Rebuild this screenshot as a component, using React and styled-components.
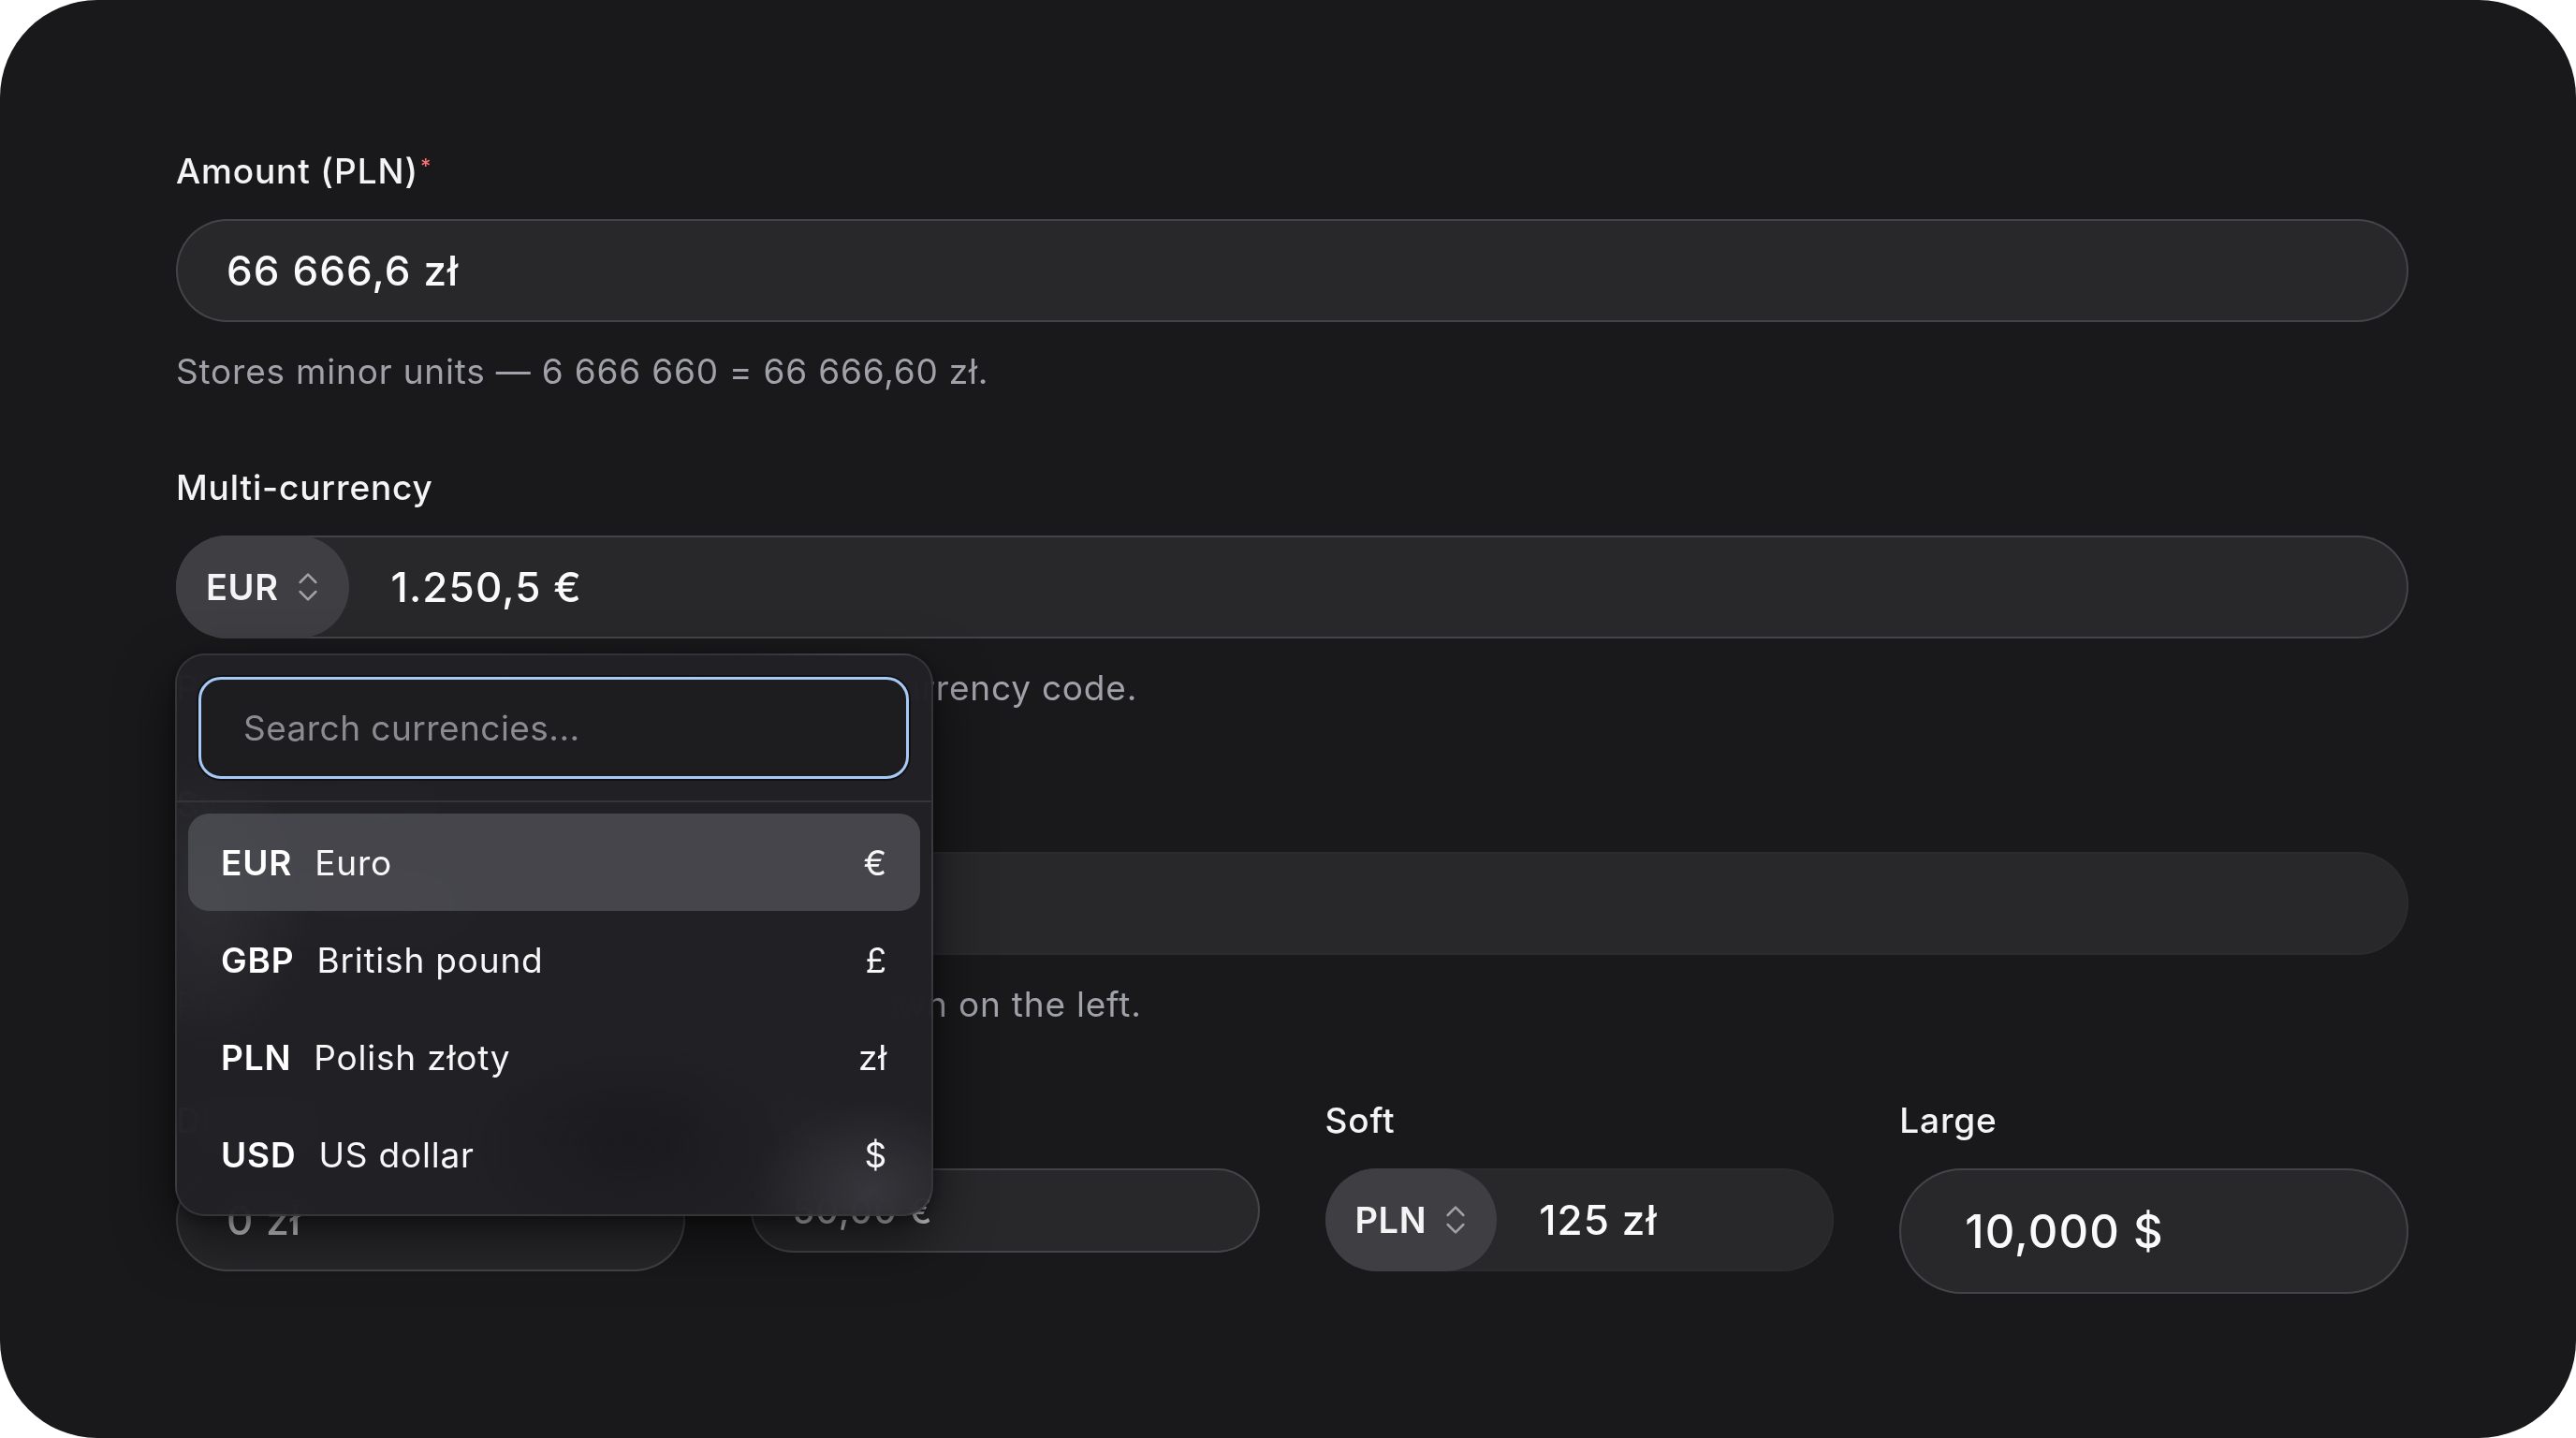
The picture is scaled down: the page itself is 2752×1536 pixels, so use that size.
import React from "react";
import styled, { createGlobalStyle } from "styled-components";
import { ChevronsUpDown } from "lucide-react";

const GlobalStyle = createGlobalStyle`
  html, body {
    margin: 0;
    padding: 0;
    background: #ffffff;
    width: 2752px;
    height: 1536px;
    overflow: hidden;
  }
  * { box-sizing: border-box; }
  body {
    font-family: Inter, "Noto Sans", "Liberation Sans", sans-serif;
  }
`;

const Card = styled.main`
  width: 2752px;
  height: 1536px;
  background: #19191b;
  border-radius: 104px;
  padding: 157px 179px 0 188px;
  font-family: Inter, "Noto Sans", "Liberation Sans", sans-serif;
`;

const Form = styled.div`
  display: flex;
  flex-direction: column;
  gap: 72px;
`;

const Field = styled.div`
  display: flex;
  flex-direction: column;
  gap: 25px;
  min-width: 0;
`;

const Label = styled.label`
  display: block;
  font-size: 37px;
  line-height: 52px;
  height: 52px;
  font-weight: 500;
  color: #f4f4f5;
  letter-spacing: 0.85px;
  white-space: nowrap;
`;

const Required = styled.span`
  color: #f87171;
  font-size: 22px;
  vertical-align: top;
  position: relative;
  top: -6px;
  margin-left: 2px;
`;

const Helper = styled.p`
  margin: 2px 0 0;
  font-size: 37px;
  line-height: 52px;
  color: #a1a1aa;
  font-weight: 400;
  letter-spacing: 0.8px;
  white-space: nowrap;
`;

const Control = styled.div`
  position: relative;
  display: flex;
  align-items: center;
  min-width: 0;
  height: ${(p) => p.$height || 110}px;
  border-radius: 999px;
  background: #28282b;
  box-shadow: inset 0 0 0 2px ${(p) => (p.$filled ? "#2b2b2e" : "#444448")};
`;

const ValueInput = styled.input`
  flex: 1;
  width: 100%;
  min-width: 0;
  height: 100%;
  border: none;
  outline: none;
  background: transparent;
  padding: 0 0 0 ${(p) => p.$pad || 54}px;
  font-family: Inter, "Noto Sans", "Liberation Sans", sans-serif;
  font-size: ${(p) => p.$size || 44}px;
  font-weight: 500;
  color: ${(p) => (p.$dim ? "#cfcfd3" : "#fafafa")};
  letter-spacing: 1.1px;
`;

const CurrencyTrigger = styled.button`
  display: flex;
  align-items: center;
  gap: 11px;
  height: 100%;
  flex-shrink: 0;
  padding: 0 24px 0 32px;
  border: none;
  border-radius: 999px;
  background: #3e3e43;
  color: #f4f4f5;
  font-family: Inter, "Noto Sans", "Liberation Sans", sans-serif;
  font-size: 38px;
  font-weight: 600;
  letter-spacing: 0.6px;
  cursor: pointer;
  svg { color: #a1a1aa; flex-shrink: 0; }
`;

const Row = styled.div`
  display: grid;
  grid-template-columns: repeat(4, minmax(0, 1fr));
  column-gap: 70px;
  align-items: start;
`;

/* Dropdown */
const Menu = styled.div`
  position: absolute;
  top: calc(100% + 16px);
  left: -1px;
  width: 810px;
  z-index: 10;
  border-radius: 32px;
  background:
    radial-gradient(ellipse 180px 140px at 92% 96%, rgba(70, 70, 78, 0.55), transparent 70%),
    radial-gradient(ellipse 160px 220px at 4% 44%, rgba(58, 58, 66, 0.45), transparent 70%),
    radial-gradient(ellipse 260px 160px at 60% 88%, rgba(16, 16, 20, 0.35), transparent 70%),
    rgba(33, 33, 37, 0.96);
  backdrop-filter: blur(28px) saturate(140%);
  -webkit-backdrop-filter: blur(28px) saturate(140%);
  border: 2px solid rgba(255, 255, 255, 0.09);
  box-shadow: 0 24px 60px rgba(0, 0, 0, 0.55), 0 4px 14px rgba(0, 0, 0, 0.35);
  overflow: hidden;
`;

const SearchWrap = styled.div`
  padding: 23px 24px 23px 23px;
  border-bottom: 2px solid #353539;
`;

const Search = styled.input`
  display: block;
  width: 100%;
  height: 109px;
  border-radius: 24px;
  border: 3.5px solid #a6c9f5;
  background: #1d1d20;
  box-shadow: 0 0 0 2px rgba(0, 0, 0, 0.45);
  outline: none;
  padding: 0 0 0 45px;
  font-family: Inter, "Noto Sans", "Liberation Sans", sans-serif;
  font-size: 37px;
  letter-spacing: 0.45px;
  color: #f4f4f5;
  &::placeholder { color: #8b8b91; }
`;

const List = styled.ul`
  list-style: none;
  margin: 0;
  padding: 12px;
  display: flex;
  flex-direction: column;
`;

const Option = styled.li`
  display: flex;
  align-items: center;
  gap: 24px;
  height: 104px;
  padding: 0 35px;
  border-radius: 22px;
  background: ${(p) => (p.$active ? "rgba(92, 92, 100, 0.62)" : "transparent")};
  color: #f7f7f8;
  font-size: 37px;
  letter-spacing: 0.8px;
`;

const Code = styled.span`
  font-weight: 600;
  color: #ffffff;
`;

const Name = styled.span`
  font-weight: 400;
`;

const Symbol = styled.span`
  margin-left: auto;
  font-weight: 400;
`;

const currencies = [
  { code: "EUR", name: "Euro", symbol: "€" },
  { code: "GBP", name: "British pound", symbol: "£" },
  { code: "PLN", name: "Polish złoty", symbol: "zł" },
  { code: "USD", name: "US dollar", symbol: "$" },
];

function Trigger({ code }) {
  return (
    <CurrencyTrigger type="button">
      {code}
      <ChevronsUpDown size={40} strokeWidth={1.5} />
    </CurrencyTrigger>
  );
}

export default function App() {
  return (
    <>
      <GlobalStyle />
      <Card>
        <Form>
          <Field>
            <Label>
              Amount (PLN)<Required>*</Required>
            </Label>
            <Control>
              <ValueInput value="66 666,6 zł" readOnly />
            </Control>
            <Helper>Stores minor units — 6 666 660 = 66 666,60 zł.</Helper>
          </Field>

          <Field>
            <Label>Multi-currency</Label>
            <Control>
              <Trigger code="EUR" />
              <ValueInput $pad={45} value="1.250,5 €" readOnly />
              <Menu>
                <SearchWrap>
                  <Search placeholder="Search currencies..." />
                </SearchWrap>
                <List>
                  {currencies.map((c, i) => (
                    <Option key={c.code} $active={i === 0}>
                      <Code>{c.code}</Code>
                      <Name>{c.name}</Name>
                      <Symbol>{c.symbol}</Symbol>
                    </Option>
                  ))}
                </List>
              </Menu>
            </Control>
            <Helper>Pick a currency — formatting follows the currency code.</Helper>
          </Field>

          <Field>
            <Label>Symbol position</Label>
            <Control $filled>
              <ValueInput value="€ 1.250,50" readOnly />
            </Control>
            <Helper>Prefix mode — the currency symbol is shown on the left.</Helper>
          </Field>

          <Row>
            <Field>
              <Label>Disabled</Label>
              <Control>
                <ValueInput $dim value="0 zł" readOnly />
              </Control>
            </Field>
            <Field>
              <Label>Small</Label>
              <Control $height={90}>
                <ValueInput $dim $pad={45} $size={38} value="50,00 €" readOnly />
              </Control>
            </Field>
            <Field>
              <Label>Soft</Label>
              <Control $filled>
                <Trigger code="PLN" />
                <ValueInput $pad={45} value="125 zł" readOnly />
              </Control>
            </Field>
            <Field>
              <Label>Large</Label>
              <Control $height={134}>
                <ValueInput $pad={70} $size={49} value="10,000 $" readOnly />
              </Control>
            </Field>
          </Row>
        </Form>
      </Card>
    </>
  );
}
